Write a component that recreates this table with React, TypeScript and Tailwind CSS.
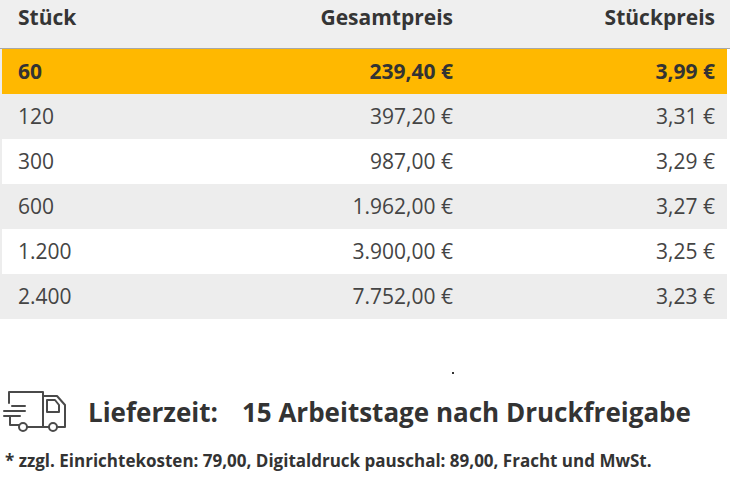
const rows = [
  { qty: '120', total: '397,20 €', unit: '3,31 €' },
  { qty: '300', total: '987,00 €', unit: '3,29 €' },
  { qty: '600', total: '1.962,00 €', unit: '3,27 €' },
  { qty: '1.200', total: '3.900,00 €', unit: '3,25 €' },
  { qty: '2.400', total: '7.752,00 €', unit: '3,23 €' },
]

function Truck() {
  return (
    <svg width="70" height="50" viewBox="0 0 70 50" fill="none" stroke="#4a4a4a" strokeWidth="2" strokeLinejoin="round" strokeLinecap="round">
      <path d="M9 17V6H43V41" />
      <path d="M43 10H57L65 19V41H58" />
      <path d="M47 14H55L59 19V26H47Z" />
      <path d="M27 41H49" />
      <path d="M12 20H25M4 25H25M4 30H20M10 30V39H19" />
      <circle cx="23" cy="41" r="4" />
      <circle cx="53" cy="41" r="4" />
    </svg>
  )
}

export default function App() {
  return (
    <div className="w-[730px] h-[490px] bg-white text-[#3c3c3c] overflow-hidden" style={{ fontFamily: '"Open Sans", "Noto Sans", sans-serif' }}>
      {/* Tabellenkopf */}
      <div className="h-[49px] bg-[#efefef] flex items-start pt-[2px] text-[21px] font-bold text-[#353535] border-b border-[#a8a8a8]">
        <div className="flex-1 pl-[18px]">Stück</div>
        <div className="w-[265px] text-right pr-[12px]">Gesamtpreis</div>
        <div className="w-[265px] text-right pr-[15px]">Stückpreis</div>
      </div>

      <div className="w-[727px] pl-[2px] bg-[#ededed]">
        <div className="h-[45px] bg-[#ffb800] flex items-center text-[21px] font-bold text-[#333]">
          <div className="flex-1 pl-[16px]">60</div>
          <div className="w-[265px] text-right pr-[12px]">239,40 €</div>
          <div className="w-[262px] text-right pr-[12px]">3,99 €</div>
        </div>
        {rows.map((r, i) => (
          <div key={r.qty} className={`h-[45px] flex items-center text-[21px] text-[#444] ${i % 2 === 1 ? 'bg-white' : 'bg-[#ededed]'}`}>
            <div className="flex-1 pl-[16px]">{r.qty}</div>
            <div className="w-[265px] text-right pr-[12px]">{r.total}</div>
            <div className="w-[262px] text-right pr-[12px]">{r.unit}</div>
          </div>
        ))}
      </div>

      <div className="relative h-[67px]">
        <span className="absolute left-[452px] top-[53px] w-[2px] h-[2px] bg-[#333]" />
      </div>

      <div className="flex items-center h-[50px]">
        <Truck />
        <span className="ml-[18px] mt-[3px] text-[26px] font-bold text-[#333]">Lieferzeit:</span>
        <span className="ml-[24px] mt-[3px] text-[26px] font-bold text-[#333]">15 Arbeitstage nach Druckfreigabe</span>
      </div>
      <div className="pl-[5px] mt-[12px] text-[17px] font-bold text-[#333]">
        * zzgl. Einrichtekosten: 79,00, Digitaldruck pauschal: 89,00, Fracht und MwSt.
      </div>
    </div>
  )
}
